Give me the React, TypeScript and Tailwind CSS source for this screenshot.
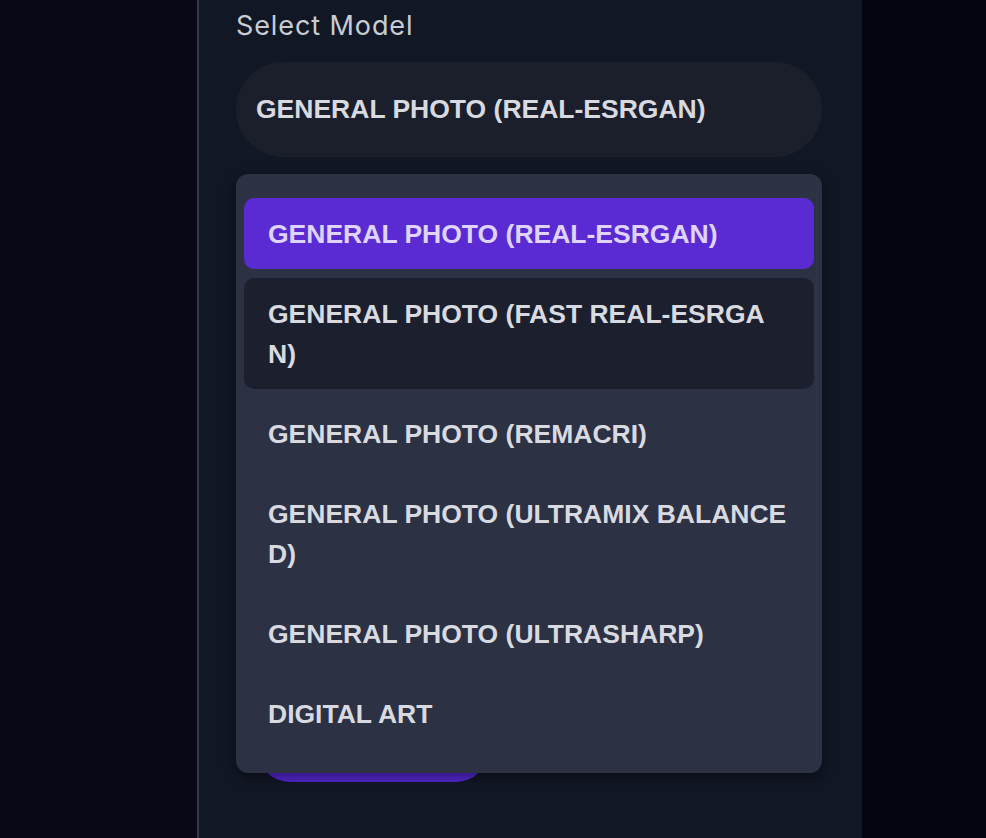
const MODELS = [
  'General Photo (Real-ESRGAN)',
  'General Photo (Fast Real-ESRGAN)',
  'General Photo (Remacri)',
  'General Photo (Ultramix Balanced)',
  'General Photo (Ultrasharp)',
  'Digital Art',
];

const optionFont = { fontFamily: '"Liberation Sans", Arial, sans-serif' };

export default function App() {
  const selected = 0;
  const hovered = 1;

  return (
    <div
      className="flex min-h-[838px] w-full bg-[#05070f]"
      style={{ fontFamily: 'Inter, "Noto Sans", sans-serif' }}
    >
      <div className="w-[197px] shrink-0 bg-[#070a16]" />
      <div className="relative w-[665px] shrink-0 border-l-2 border-[#363b4a] bg-[#121726] pl-[37px] pr-[40px] pt-[6px]">
        <div className="text-[27px] leading-[39px] tracking-[0.9px] text-[#c9ccd3]">Select Model</div>

        {/* Select */}
        <div className="relative mt-[17px]">
          <button
            className="flex h-[95px] w-full items-center rounded-full bg-[#1b1f2c] px-[20px] text-left text-[26.5px] font-bold uppercase text-[#d8dae0]"
            style={optionFont}
          >
            {MODELS[selected]}
          </button>

          {/* Dropdown menu */}
          <div
            className="absolute left-0 right-0 top-[calc(100%+17px)] z-10 flex flex-col gap-[9px] rounded-xl bg-[#2c3144] px-2 py-6 shadow-[0_4px_14px_rgba(0,0,0,0.45)]"
            style={optionFont}
          >
            {MODELS.map((m, i) => (
              <div
                key={m}
                className={`break-all rounded-[10px] px-6 py-[15.5px] text-[26.5px] font-bold uppercase leading-[40px] ${
                  i === selected
                    ? 'bg-[#5a2bd3] text-[#dfd3ff]'
                    : i === hovered
                      ? 'bg-[#1c202e] text-[#d8dae0]'
                      : 'text-[#d8dae0]'
                }`}
              >
                {m}
              </div>
            ))}
          </div>
        </div>

        {/* Action button, mostly hidden under the menu */}
        <div className="mt-[561px] ml-[22px] h-[64px] w-[230px] rounded-full bg-[#5427cf]" />
      </div>
      <div className="flex-1 bg-[#04050e]" />
    </div>
  );
}
